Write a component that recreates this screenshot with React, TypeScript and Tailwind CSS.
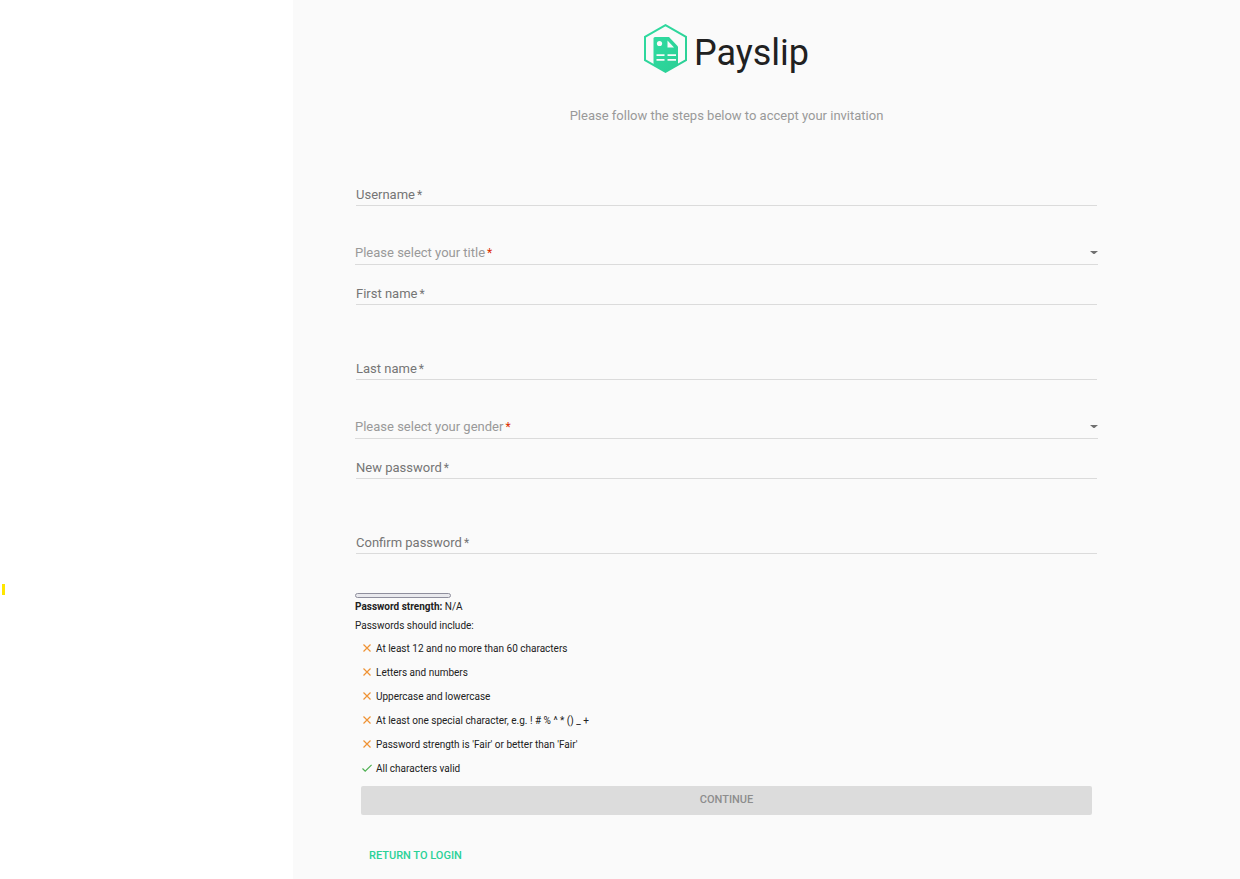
import { useId } from "react";

const rules = [
  { text: "At least 12 and no more than 60 characters", valid: false },
  { text: "Letters and numbers", valid: false },
  { text: "Uppercase and lowercase", valid: false },
  { text: "At least one special character, e.g. ! # % ^ * () _ +", valid: false },
  { text: "Password strength is 'Fair' or better than 'Fair'", valid: false },
  { text: "All characters valid", valid: true },
];

export default function App() {
  return (
    <div className="flex min-h-screen bg-white font-['Roboto',sans-serif] text-[#212121]">
      <aside className="flex w-[293px] shrink-0 items-start pl-0.5 pt-[584px]">
        <span className="h-[11px] w-[3px] bg-[#ffe600]" />
      </aside>

      <main className="min-w-0 flex-1 bg-[#fafafa] pl-[62px] pr-[142px] pt-6">
        <header className="flex flex-col items-center">
          <div className="flex h-[49px] items-center gap-[7px]">
            <Logo />
            <h1 className="pt-2 text-[36px] leading-[48px]">Payslip</h1>
          </div>
          <p className="mt-[33px] text-[13px] leading-5 text-[#999]">
            Please follow the steps below to accept your invitation
          </p>
        </header>

        <form className="pt-[59px]">
          <TextField label="Username" />
          <SelectField label="Please select your title" options={["Mr", "Mrs", "Ms", "Dr"]} />
          <TextField label="First name" />
          <div className="h-[54px]" />
          <TextField label="Last name" />
          <SelectField label="Please select your gender" options={["Female", "Male", "Other"]} />
          <TextField label="New password" type="password" />
          <div className="h-[54px]" />
          <TextField label="Confirm password" type="password" />

          <section className="mt-[39px] text-[10px]">
            <progress
              value={0}
              max={100}
              aria-label="Password strength"
              className="block h-[5px] w-24 appearance-none overflow-hidden rounded-full border border-[#8f8f9d] bg-[#e9e9ed] [&::-webkit-progress-bar]:bg-transparent"
            />
            <p className="leading-[18px]">
              <strong className="font-bold">Password strength:</strong> N/A
            </p>
            <p className="leading-5">Passwords should include:</p>
            <ul>
              {rules.map((rule) => (
                <li key={rule.text} className="flex h-6 items-center gap-1 pl-[7px]">
                  {rule.valid ? <CheckIcon /> : <CrossIcon />}
                  {rule.text}
                </li>
              ))}
            </ul>
          </section>

          <div className="px-1.5 pt-1.5">
            <button
              type="submit"
              disabled
              className="block h-[29px] w-full rounded-[2px] bg-[#dcdcdc] text-[11px] font-medium text-[#8d8d8d]"
            >
              CONTINUE
            </button>
            <a
              href="#login"
              className="ml-2 mt-[31px] inline-block text-[11px] font-medium leading-5 text-[#2bd197]"
            >
              RETURN TO LOGIN
            </a>
          </div>
        </form>
      </main>
    </div>
  );
}

function TextField({ label, type = "text" }: { label: string; type?: string }) {
  const id = useId();

  return (
    <div className="mx-px grid h-[21px] *:[grid-area:1/1]">
      <input
        id={id}
        type={type}
        required
        className="w-full border-b border-[#dbdbdb] bg-transparent text-[13px] outline-none focus:border-[#2bd197]"
      />
      <label htmlFor={id} className="text-[13px] leading-5 text-[#757575]">
        {label}
        <span className="pl-0.5 text-[12px] leading-none">*</span>
      </label>
    </div>
  );
}

function SelectField({ label, options }: { label: string; options: string[] }) {
  const id = useId();

  return (
    <div className="mb-[19px] mt-[33px] grid h-[26px] *:[grid-area:1/1]">
      <select
        id={id}
        required
        defaultValue=""
        className="w-full appearance-none border-b border-[#dbdbdb] bg-transparent text-[13px] outline-none focus:border-[#2bd197]"
      >
        <option value="" />
        {options.map((option) => (
          <option key={option}>{option}</option>
        ))}
      </select>
      <div className="pointer-events-none flex items-center justify-between pt-px">
        <label htmlFor={id} className="text-[13px] leading-5 text-[#999]">
          {label}
          <span className="pl-0.5 text-[12px] leading-none text-[#dd2c00]">*</span>
        </label>
        <svg className="h-[3px] w-2 fill-[#707070]" viewBox="0 0 8 3">
          <path d="M0 0h8L4.5 3h-1z" />
        </svg>
      </div>
    </div>
  );
}

function CrossIcon() {
  return (
    <svg className="h-2.5 w-2.5 shrink-0" viewBox="0 0 10 10" fill="none" stroke="#ef9234" strokeWidth={1.2}>
      <path d="M1.5 1.5l7 7M8.5 1.5l-7 7" />
    </svg>
  );
}

function CheckIcon() {
  return (
    <svg className="h-2.5 w-2.5 shrink-0" viewBox="0 0 10 10" fill="none" stroke="#4caf50" strokeWidth={1.2}>
      <path d="M.5 5.5l2.7 2.7L9.6 1.8" />
    </svg>
  );
}

function Logo() {
  return (
    <svg className="h-[49px] w-[43px]" viewBox="0 0 43 49" aria-hidden="true">
      <defs>
        <linearGradient id="logo-fill" x1="0" y1="0" x2="1" y2="1">
          <stop offset="0" stopColor="#2fdba0" />
          <stop offset="1" stopColor="#2bcf95" />
        </linearGradient>
      </defs>
      <path
        d="M21.5 1.2L42 12.8v23.4L21.5 47.8 1 36.2V12.8z"
        fill="none"
        stroke="url(#logo-fill)"
        strokeWidth={2}
      />
      <path
        d="M11 13h14l9 9.5V40.5L21.5 48.2 9.5 41V14.5Q9.5 13 11 13z"
        fill="url(#logo-fill)"
      />
      <circle cx="15.5" cy="19.5" r="2.6" fill="#fafafa" />
      <path d="M23.5 16.5v7H30z" fill="#fafafa" />
      <path
        d="M12.5 31.2h8M12.5 35.8h8M23.5 31.2H32M23.5 35.8H32"
        stroke="#fafafa"
        strokeWidth={1.8}
      />
    </svg>
  );
}
